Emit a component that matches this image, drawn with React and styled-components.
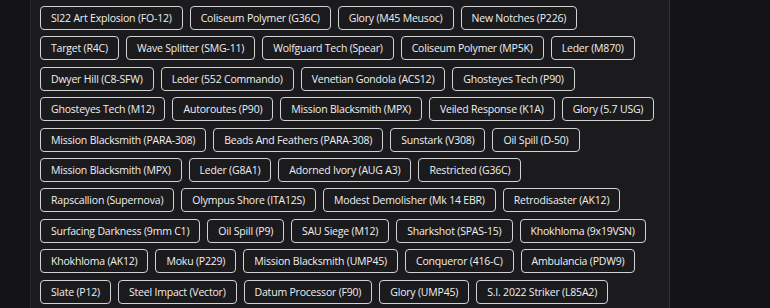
import React from 'react';
import styled, { createGlobalStyle } from 'styled-components';

const rows = [
  ['SI22 Art Explosion (FO-12)', 'Coliseum Polymer (G36C)', 'Glory (M45 Meusoc)', 'New Notches (P226)'],
  ['Target (R4C)', 'Wave Splitter (SMG-11)', 'Wolfguard Tech (Spear)', 'Coliseum Polymer (MP5K)', 'Leder (M870)'],
  ['Dwyer Hill (C8-SFW)', 'Leder (552 Commando)', 'Venetian Gondola (ACS12)', 'Ghosteyes Tech (P90)'],
  ['Ghosteyes Tech (M12)', 'Autoroutes (P90)', 'Mission Blacksmith (MPX)', 'Veiled Response (K1A)', 'Glory (5.7 USG)'],
  ['Mission Blacksmith (PARA-308)', 'Beads And Feathers (PARA-308)', 'Sunstark (V308)', 'Oil Spill (D-50)'],
  ['Mission Blacksmith (MPX)', 'Leder (G8A1)', 'Adorned Ivory (AUG A3)', 'Restricted (G36C)'],
  ['Rapscallion (Supernova)', 'Olympus Shore (ITA12S)', 'Modest Demolisher (Mk 14 EBR)', 'Retrodisaster (AK12)'],
  ['Surfacing Darkness (9mm C1)', 'Oil Spill (P9)', 'SAU Siege (M12)', 'Sharkshot (SPAS-15)', 'Khokhloma (9x19VSN)'],
  ['Khokhloma (AK12)', 'Moku (P229)', 'Mission Blacksmith (UMP45)', 'Conqueror (416-C)', 'Ambulancia (PDW9)'],
  ['Slate (P12)', 'Steel Impact (Vector)', 'Datum Processor (F90)', 'Glory (UMP45)', 'S.I. 2022 Striker (L85A2)'],
];

function App() {
  return (
    <>
      <GlobalStyle />
      <Page>
        <Sidebar />
        <Panel>
          <TagList>
            {rows.map((row, i) => (
              <TagRow key={i}>
                {row.map((name, j) => (
                  <Tag key={j}>{name}</Tag>
                ))}
              </TagRow>
            ))}
          </TagList>
        </Panel>
      </Page>
    </>
  );
}

const GlobalStyle = createGlobalStyle`
  body {
    margin: 0;
    background: #141316;
    font-family: "Open Sans", "Liberation Sans", sans-serif;
    overflow: hidden;
  }
`;

const Page = styled.div`
  display: flex;
  height: 308px;
  overflow: hidden;
`;

const Sidebar = styled.div`
  width: 30px;
  flex-shrink: 0;
  border-right: 1px solid #29282b;
`;

const Panel = styled.div`
  width: 629px;
  flex-shrink: 0;
  background: #1b1a1d;
  border-right: 1px solid #333236;
  padding: 6px 0 0 9px;
`;

const TagList = styled.div`
  display: flex;
  flex-direction: column;
  gap: 6.4px;
`;

const TagRow = styled.div`
  display: flex;
  gap: 7px;
`;

const Tag = styled.div`
  height: 24px;
  box-sizing: border-box;
  padding: 0 10px;
  border: 1px solid #d2d2d2;
  border-radius: 4px;
  color: #f0f0f0;
  font-size: 10.5px;
  letter-spacing: -0.2px;
  line-height: 22px;
  white-space: nowrap;
`;

export default App;
